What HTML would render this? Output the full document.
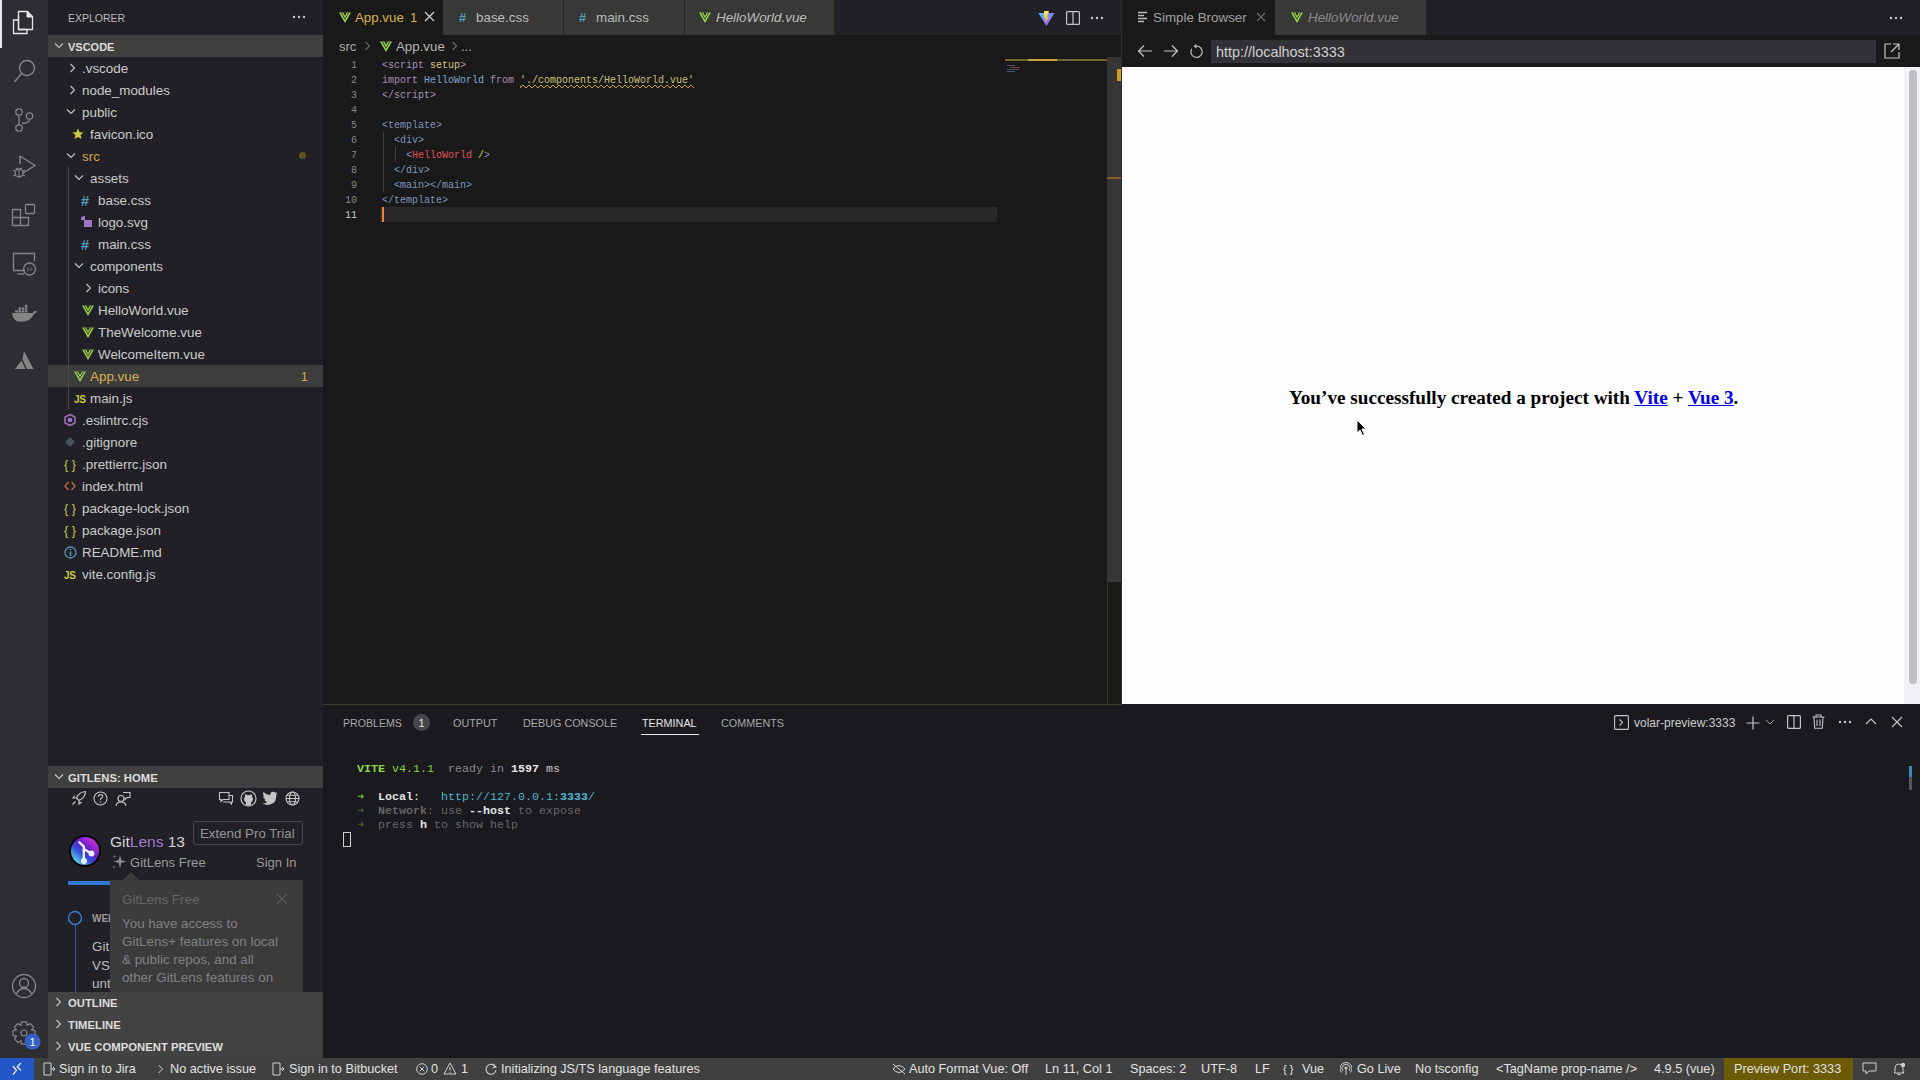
<!DOCTYPE html>
<html><head><meta charset="utf-8">
<style>
*{margin:0;padding:0;box-sizing:border-box}
html,body{width:1920px;height:1080px;overflow:hidden;background:#1e1e1e;font-family:"Liberation Sans",sans-serif;color:#ccc}
.b{position:absolute}
.t{position:absolute;white-space:nowrap}
.m{font-family:"Liberation Mono",monospace}
</style></head><body>

<div class="b" style="left:0px;top:0px;width:48px;height:1058px;background:#2d2d32;"></div>
<div class="b" style="left:48px;top:0px;width:275px;height:1058px;background:#202026;"></div>
<div class="b" style="left:323px;top:0px;width:799px;height:704px;background:#191919;"></div>
<div class="b" style="left:1122px;top:0px;width:798px;height:704px;background:#191919;"></div>
<div class="b" style="left:323px;top:704px;width:1597px;height:354px;background:#19191e;"></div>
<div class="b" style="left:0px;top:1058px;width:1920px;height:22px;background:#404040;"></div>
<div class="b" style="left:0px;top:0px;width:2px;height:48px;background:#e8e8e8;"></div>
<svg class="b" style="left:12px;top:10px;" width="24" height="26" viewBox="0 0 24 26"><path d="M6.5 5.5 V19.5 H15 V23.5 H1.5 V10 H6" fill="none" stroke="#e6e6e6" stroke-width="1.3"/><path d="M6.5 1.5 H15.5 L20.5 6.5 V19.5 H6.5 Z" fill="none" stroke="#e6e6e6" stroke-width="1.3"/><path d="M15 1.5 V7 H20.5" fill="#e6e6e6" stroke="#e6e6e6" stroke-width="1"/></svg>
<svg class="b" style="left:12px;top:58px;" width="26" height="26" viewBox="0 0 26 26"><circle cx="15" cy="10" r="7.5" fill="none" stroke="#858585" stroke-width="1.4"/><path d="M9.7 15.3 L2.5 24" stroke="#858585" stroke-width="1.5"/></svg>
<svg class="b" style="left:12px;top:106px;" width="26" height="26" viewBox="0 0 26 26"><circle cx="7" cy="6" r="3.2" fill="none" stroke="#858585" stroke-width="1.3"/><circle cx="17.5" cy="10" r="3.2" fill="none" stroke="#858585" stroke-width="1.3"/><circle cx="7" cy="22" r="3.2" fill="none" stroke="#858585" stroke-width="1.3"/><path d="M7 9.2 V18.8 M17.5 13.2 Q17.5 17 10 17.5" fill="none" stroke="#858585" stroke-width="1.3"/></svg>
<svg class="b" style="left:12px;top:154px;" width="26" height="26" viewBox="0 0 26 26"><path d="M8 2 L23 11.5 L11 19 M8 2 V10" fill="none" stroke="#858585" stroke-width="1.4"/><circle cx="7" cy="19" r="4" fill="none" stroke="#858585" stroke-width="1.4"/><path d="M1 16 L3.5 17 M1 22 L3.5 21 M13 16 L10.5 17 M13 22 L10.5 21 M7 15 V23 M4 14 L5.5 15.5 M10 14 L8.5 15.5" stroke="#858585" stroke-width="1.1"/></svg>
<svg class="b" style="left:11px;top:202px;" width="27" height="28" viewBox="0 0 27 28"><path d="M1.5 7.5 H9.5 V15.5 H1.5 Z M1.5 15.5 H9.5 V23.5 H1.5 Z M9.5 15.5 H17.5 V23.5 H9.5 Z" fill="none" stroke="#858585" stroke-width="1.3"/><rect x="14.5" y="2.5" width="9" height="9" rx="1" fill="none" stroke="#858585" stroke-width="1.3"/></svg>
<svg class="b" style="left:12px;top:252px;" width="26" height="26" viewBox="0 0 26 26"><path d="M13 18.5 H1.5 V1.5 H22.5 V9" fill="none" stroke="#858585" stroke-width="1.3"/><path d="M5 22 H12" stroke="#858585" stroke-width="1.3"/><circle cx="17.5" cy="17" r="6" fill="none" stroke="#858585" stroke-width="1.3"/><path d="M15 15.5 L17 17.5 M18 15.5 L20 17.5 M15 19 L16.5 17.5 M18 19 L19.5 17.5" stroke="#858585" stroke-width="1"/></svg>
<svg class="b" style="left:10px;top:302px;" width="28" height="22" viewBox="0 0 28 22"><path d="M2 11 H23 Q24 8.3 26.5 9 Q26.5 11.5 23.8 12.3 Q21 19.5 11 19.8 Q3 19.8 2 11 Z" fill="#858585"/><path d="M5.2 8.3 h2.6 v2.2 h-2.6z M8.4 8.3 h2.6 v2.2 h-2.6z M11.6 8.3 h2.6 v2.2 h-2.6z M14.8 8.3 h2.6 v2.2 h-2.6z M8.4 5.5 h2.6 v2.2 h-2.6z M11.6 5.5 h2.6 v2.2 h-2.6z M14.8 5.5 h2.6 v2.2 h-2.6z M14.8 2.7 h2.6 v2.2 h-2.6z" fill="#858585"/></svg>
<svg class="b" style="left:13px;top:349px;" width="22" height="22" viewBox="0 0 22 22"><path d="M11 2 L20.5 20 H14 L9.5 10.5 Q10.2 5.5 11 2 Z" fill="#858585"/><path d="M8.5 11.5 L12.5 20 H2 Z" fill="#858585"/></svg>
<svg class="b" style="left:11px;top:973px;" width="26" height="26" viewBox="0 0 26 26"><circle cx="13" cy="13" r="11.5" fill="none" stroke="#858585" stroke-width="1.3"/><circle cx="13" cy="10" r="4.5" fill="none" stroke="#858585" stroke-width="1.3"/><path d="M5.5 21 Q8 15.5 13 15.5 Q18 15.5 20.5 21" fill="none" stroke="#858585" stroke-width="1.3"/></svg>
<svg class="b" style="left:11px;top:1020px;" width="26" height="26" viewBox="0 0 26 26"><path d="M20.49 9.66 L24.03 10.53 L24.03 15.47 L20.49 16.34 L20.66 15.93 L22.54 19.05 L19.05 22.54 L15.93 20.66 L16.34 20.49 L15.47 24.03 L10.53 24.03 L9.66 20.49 L10.07 20.66 L6.95 22.54 L3.46 19.05 L5.34 15.93 L5.51 16.34 L1.97 15.47 L1.97 10.53 L5.51 9.66 L5.34 10.07 L3.46 6.95 L6.95 3.46 L10.07 5.34 L9.66 5.51 L10.53 1.97 L15.47 1.97 L16.34 5.51 L15.93 5.34 L19.05 3.46 L22.54 6.95 L20.66 10.07 Z" fill="none" stroke="#858585" stroke-width="1.2" stroke-linejoin="round"/><circle cx="13" cy="13" r="3" fill="none" stroke="#858585" stroke-width="1.2"/></svg>
<svg class="b" style="left:24px;top:1033px;" width="17" height="17" viewBox="0 0 17 17"><circle cx="8.5" cy="8.5" r="8" fill="#3560c8"/><text x="8.5" y="12.5" font-size="11" text-anchor="middle" fill="#fff" font-family="Liberation Sans">1</text></svg>
<div class="t" style="left:68px;top:8px;height:20px;line-height:20px;font-size:10.5px;color:#bbbbbb;font-weight:normal;font-style:normal;font-family:'Liberation Sans',sans-serif;">EXPLORER</div>
<svg class="b" style="left:292px;top:15px;" width="16" height="4" viewBox="0 0 16 4"><circle cx="2" cy="2" r="1.2" fill="#c5c5c5"/><circle cx="7" cy="2" r="1.2" fill="#c5c5c5"/><circle cx="12" cy="2" r="1.2" fill="#c5c5c5"/></svg>
<div class="b" style="left:48px;top:35px;width:275px;height:22px;background:#404040;"></div>
<svg class="b" style="left:54px;top:42px;" width="10" height="7" viewBox="0 0 10 7"><path d="M1 1.5 L5 5.5 L9 1.5" fill="none" stroke="#c5c5c5" stroke-width="1.1"/></svg>
<div class="t" style="left:68px;top:37px;height:20px;line-height:20px;font-size:11px;color:#dddddd;font-weight:bold;font-style:normal;font-family:'Liberation Sans',sans-serif;">VSCODE</div>
<svg class="b" style="left:69px;top:63px;" width="7" height="10" viewBox="0 0 7 10"><path d="M1.5 1 L5.5 5 L1.5 9" fill="none" stroke="#c5c5c5" stroke-width="1.1"/></svg>
<div class="t" style="left:82px;top:59px;height:20px;line-height:20px;font-size:13.4px;color:#cccccc;font-weight:normal;font-style:normal;font-family:'Liberation Sans',sans-serif;">.vscode</div>
<svg class="b" style="left:69px;top:85px;" width="7" height="10" viewBox="0 0 7 10"><path d="M1.5 1 L5.5 5 L1.5 9" fill="none" stroke="#c5c5c5" stroke-width="1.1"/></svg>
<div class="t" style="left:82px;top:81px;height:20px;line-height:20px;font-size:13.4px;color:#cccccc;font-weight:normal;font-style:normal;font-family:'Liberation Sans',sans-serif;">node_modules</div>
<svg class="b" style="left:66px;top:108px;" width="10" height="7" viewBox="0 0 10 7"><path d="M1 1.5 L5 5.5 L9 1.5" fill="none" stroke="#c5c5c5" stroke-width="1.1"/></svg>
<div class="t" style="left:82px;top:103px;height:20px;line-height:20px;font-size:13.4px;color:#cccccc;font-weight:normal;font-style:normal;font-family:'Liberation Sans',sans-serif;">public</div>
<svg class="b" style="left:72px;top:128px;" width="12" height="12" viewBox="0 0 12 12"><path d="M6 0.5 L7.6 4.2 L11.6 4.5 L8.6 7.1 L9.5 11 L6 8.9 L2.5 11 L3.4 7.1 L0.4 4.5 L4.4 4.2 Z" fill="#cbcb41"/></svg>
<div class="t" style="left:90px;top:125px;height:20px;line-height:20px;font-size:13.4px;color:#cccccc;font-weight:normal;font-style:normal;font-family:'Liberation Sans',sans-serif;">favicon.ico</div>
<svg class="b" style="left:66px;top:152px;" width="10" height="7" viewBox="0 0 10 7"><path d="M1 1.5 L5 5.5 L9 1.5" fill="none" stroke="#c5c5c5" stroke-width="1.1"/></svg>
<div class="t" style="left:82px;top:147px;height:20px;line-height:20px;font-size:13.4px;color:#d7a64a;font-weight:normal;font-style:normal;font-family:'Liberation Sans',sans-serif;">src</div>
<svg class="b" style="left:74px;top:174px;" width="10" height="7" viewBox="0 0 10 7"><path d="M1 1.5 L5 5.5 L9 1.5" fill="none" stroke="#c5c5c5" stroke-width="1.1"/></svg>
<div class="t" style="left:90px;top:169px;height:20px;line-height:20px;font-size:13.4px;color:#cccccc;font-weight:normal;font-style:normal;font-family:'Liberation Sans',sans-serif;">assets</div>
<div class="t" style="left:81px;top:191px;height:20px;line-height:20px;font-size:14.5px;color:#519aba;font-weight:bold;font-style:normal;font-family:'Liberation Sans',sans-serif;">#</div>
<div class="t" style="left:98px;top:191px;height:20px;line-height:20px;font-size:13.4px;color:#cccccc;font-weight:normal;font-style:normal;font-family:'Liberation Sans',sans-serif;">base.css</div>
<svg class="b" style="left:80px;top:215px;" width="13" height="13" viewBox="0 0 13 13"><path d="M1 4 Q1 1 4 1 L5 1 L5 5 L1 5Z" fill="#a074c4"/><rect x="4" y="5" width="8" height="7" fill="#a074c4"/></svg>
<div class="t" style="left:98px;top:213px;height:20px;line-height:20px;font-size:13.4px;color:#cccccc;font-weight:normal;font-style:normal;font-family:'Liberation Sans',sans-serif;">logo.svg</div>
<div class="t" style="left:81px;top:235px;height:20px;line-height:20px;font-size:14.5px;color:#519aba;font-weight:bold;font-style:normal;font-family:'Liberation Sans',sans-serif;">#</div>
<div class="t" style="left:98px;top:235px;height:20px;line-height:20px;font-size:13.4px;color:#cccccc;font-weight:normal;font-style:normal;font-family:'Liberation Sans',sans-serif;">main.css</div>
<svg class="b" style="left:74px;top:262px;" width="10" height="7" viewBox="0 0 10 7"><path d="M1 1.5 L5 5.5 L9 1.5" fill="none" stroke="#c5c5c5" stroke-width="1.1"/></svg>
<div class="t" style="left:90px;top:257px;height:20px;line-height:20px;font-size:13.4px;color:#cccccc;font-weight:normal;font-style:normal;font-family:'Liberation Sans',sans-serif;">components</div>
<svg class="b" style="left:85px;top:283px;" width="7" height="10" viewBox="0 0 7 10"><path d="M1.5 1 L5.5 5 L1.5 9" fill="none" stroke="#c5c5c5" stroke-width="1.1"/></svg>
<div class="t" style="left:98px;top:279px;height:20px;line-height:20px;font-size:13.4px;color:#cccccc;font-weight:normal;font-style:normal;font-family:'Liberation Sans',sans-serif;">icons</div>
<svg class="b" style="left:82px;top:305px;" width="12" height="12" viewBox="0 0 12 12"><path d="M0 0.5 H12 L6 11 Z" fill="#9bd04f"/><path d="M2.3 0.5 L6 7.2 L9.7 0.5" fill="none" stroke="#2a3a20" stroke-width="0.9"/><path d="M4.2 0.5 H7.8 L6 3.8 Z" fill="#1e1e1e"/></svg>
<div class="t" style="left:98px;top:301px;height:20px;line-height:20px;font-size:13.4px;color:#cccccc;font-weight:normal;font-style:normal;font-family:'Liberation Sans',sans-serif;">HelloWorld.vue</div>
<svg class="b" style="left:82px;top:327px;" width="12" height="12" viewBox="0 0 12 12"><path d="M0 0.5 H12 L6 11 Z" fill="#9bd04f"/><path d="M2.3 0.5 L6 7.2 L9.7 0.5" fill="none" stroke="#2a3a20" stroke-width="0.9"/><path d="M4.2 0.5 H7.8 L6 3.8 Z" fill="#1e1e1e"/></svg>
<div class="t" style="left:98px;top:323px;height:20px;line-height:20px;font-size:13.4px;color:#cccccc;font-weight:normal;font-style:normal;font-family:'Liberation Sans',sans-serif;">TheWelcome.vue</div>
<svg class="b" style="left:82px;top:349px;" width="12" height="12" viewBox="0 0 12 12"><path d="M0 0.5 H12 L6 11 Z" fill="#9bd04f"/><path d="M2.3 0.5 L6 7.2 L9.7 0.5" fill="none" stroke="#2a3a20" stroke-width="0.9"/><path d="M4.2 0.5 H7.8 L6 3.8 Z" fill="#1e1e1e"/></svg>
<div class="t" style="left:98px;top:345px;height:20px;line-height:20px;font-size:13.4px;color:#cccccc;font-weight:normal;font-style:normal;font-family:'Liberation Sans',sans-serif;">WelcomeItem.vue</div>
<div class="b" style="left:48px;top:365px;width:275px;height:22px;background:#3d3d3e;"></div>
<svg class="b" style="left:74px;top:371px;" width="12" height="12" viewBox="0 0 12 12"><path d="M0 0.5 H12 L6 11 Z" fill="#9bd04f"/><path d="M2.3 0.5 L6 7.2 L9.7 0.5" fill="none" stroke="#2a3a20" stroke-width="0.9"/><path d="M4.2 0.5 H7.8 L6 3.8 Z" fill="#1e1e1e"/></svg>
<div class="t" style="left:90px;top:367px;height:20px;line-height:20px;font-size:13.4px;color:#d7b24a;font-weight:normal;font-style:normal;font-family:'Liberation Sans',sans-serif;">App.vue</div>
<div class="t" style="left:74px;top:390px;height:20px;line-height:20px;font-size:10px;color:#cbcb41;font-weight:bold;font-style:normal;font-family:'Liberation Sans',sans-serif;letter-spacing:-0.3px">JS</div>
<div class="t" style="left:90px;top:389px;height:20px;line-height:20px;font-size:13.4px;color:#cccccc;font-weight:normal;font-style:normal;font-family:'Liberation Sans',sans-serif;">main.js</div>
<svg class="b" style="left:64px;top:414px;" width="12" height="12" viewBox="0 0 12 12"><path d="M6 0.5 L11 3.2 V8.8 L6 11.5 L1 8.8 V3.2 Z" fill="none" stroke="#a074c4" stroke-width="1.5"/><circle cx="6" cy="6" r="2.3" fill="#a074c4"/></svg>
<div class="t" style="left:82px;top:411px;height:20px;line-height:20px;font-size:13.4px;color:#cccccc;font-weight:normal;font-style:normal;font-family:'Liberation Sans',sans-serif;">.eslintrc.cjs</div>
<svg class="b" style="left:64px;top:436px;" width="12" height="12" viewBox="0 0 12 12"><path d="M6 1 L11 6 L6 11 L1 6 Z" fill="#41535b"/></svg>
<div class="t" style="left:82px;top:433px;height:20px;line-height:20px;font-size:13.4px;color:#cccccc;font-weight:normal;font-style:normal;font-family:'Liberation Sans',sans-serif;">.gitignore</div>
<div class="t" style="left:64px;top:455px;height:20px;line-height:20px;font-size:12.5px;color:#c8c845;font-weight:normal;font-style:normal;font-family:'Liberation Sans',sans-serif;letter-spacing:0px">{&nbsp;}</div>
<div class="t" style="left:82px;top:455px;height:20px;line-height:20px;font-size:13.4px;color:#cccccc;font-weight:normal;font-style:normal;font-family:'Liberation Sans',sans-serif;">.prettierrc.json</div>
<svg class="b" style="left:64px;top:481px;" width="12" height="10" viewBox="0 0 12 10"><path d="M4.5 1 L1 5 L4.5 9 M7.5 1 L11 5 L7.5 9" fill="none" stroke="#c8693a" stroke-width="1.2"/></svg>
<div class="t" style="left:82px;top:477px;height:20px;line-height:20px;font-size:13.4px;color:#cccccc;font-weight:normal;font-style:normal;font-family:'Liberation Sans',sans-serif;">index.html</div>
<div class="t" style="left:64px;top:499px;height:20px;line-height:20px;font-size:12.5px;color:#c8c845;font-weight:normal;font-style:normal;font-family:'Liberation Sans',sans-serif;letter-spacing:0px">{&nbsp;}</div>
<div class="t" style="left:82px;top:499px;height:20px;line-height:20px;font-size:13.4px;color:#cccccc;font-weight:normal;font-style:normal;font-family:'Liberation Sans',sans-serif;">package-lock.json</div>
<div class="t" style="left:64px;top:521px;height:20px;line-height:20px;font-size:12.5px;color:#c8c845;font-weight:normal;font-style:normal;font-family:'Liberation Sans',sans-serif;letter-spacing:0px">{&nbsp;}</div>
<div class="t" style="left:82px;top:521px;height:20px;line-height:20px;font-size:13.4px;color:#cccccc;font-weight:normal;font-style:normal;font-family:'Liberation Sans',sans-serif;">package.json</div>
<svg class="b" style="left:64px;top:546px;" width="13" height="13" viewBox="0 0 13 13"><circle cx="6.5" cy="6.5" r="5.5" fill="none" stroke="#519aba" stroke-width="1.3"/><path d="M6.5 5.5 V10 M6.5 3 V4" stroke="#519aba" stroke-width="1.5"/></svg>
<div class="t" style="left:82px;top:543px;height:20px;line-height:20px;font-size:13.4px;color:#cccccc;font-weight:normal;font-style:normal;font-family:'Liberation Sans',sans-serif;">README.md</div>
<div class="t" style="left:64px;top:566px;height:20px;line-height:20px;font-size:10px;color:#cbcb41;font-weight:bold;font-style:normal;font-family:'Liberation Sans',sans-serif;letter-spacing:-0.3px">JS</div>
<div class="t" style="left:82px;top:565px;height:20px;line-height:20px;font-size:13.4px;color:#cccccc;font-weight:normal;font-style:normal;font-family:'Liberation Sans',sans-serif;">vite.config.js</div>
<svg class="b" style="left:298px;top:151px;" width="9" height="9" viewBox="0 0 9 9"><circle cx="4.5" cy="4.5" r="3.5" fill="#5e5020"/></svg>
<div class="t" style="left:301px;top:367px;height:20px;line-height:20px;font-size:12px;color:#d7b24a;font-weight:normal;font-style:normal;font-family:'Liberation Sans',sans-serif;">1</div>
<div class="b" style="left:68px;top:167px;width:1px;height:242px;background:#4a4a4e;"></div>
<div class="b" style="left:48px;top:766px;width:275px;height:22px;background:#404040;"></div>
<svg class="b" style="left:54px;top:773px;" width="10" height="7" viewBox="0 0 10 7"><path d="M1 1.5 L5 5.5 L9 1.5" fill="none" stroke="#c5c5c5" stroke-width="1.1"/></svg>
<div class="t" style="left:68px;top:768px;height:20px;line-height:20px;font-size:11.3px;color:#dddddd;font-weight:bold;font-style:normal;font-family:'Liberation Sans',sans-serif;">GITLENS: HOME</div>
<svg class="b" style="left:71px;top:790px;" width="16" height="16" viewBox="0 0 16 16"><path d="M14.5 1.5 Q8 2 5.5 8 L8 10.5 Q14 8 14.5 1.5 Z M5.5 8 L2 8 L4 5.5 M8 10.5 V14 L10.5 12 M4.5 11.5 L1.5 14.5" fill="none" stroke="#c5c5c5" stroke-width="1.2"/></svg>
<svg class="b" style="left:93px;top:791px;" width="15" height="15" viewBox="0 0 15 15"><circle cx="7.5" cy="7.5" r="6.5" fill="none" stroke="#c5c5c5" stroke-width="1.1"/><path d="M5.3 5.8 Q5.3 3.6 7.5 3.6 Q9.7 3.6 9.7 5.6 Q9.7 7 7.5 7.8 V9" fill="none" stroke="#c5c5c5" stroke-width="1.1"/><circle cx="7.5" cy="11" r="0.8" fill="#c5c5c5"/></svg>
<svg class="b" style="left:115px;top:791px;" width="16" height="16" viewBox="0 0 16 16"><circle cx="6" cy="7.5" r="3" fill="none" stroke="#c5c5c5" stroke-width="1.1"/><path d="M1 15 Q1.5 11 6 11 Q10.5 11 11 15 M8 1.5 H15 V6.5 H12 L10 8.5 V6.5" fill="none" stroke="#c5c5c5" stroke-width="1.1"/></svg>
<svg class="b" style="left:218px;top:791px;" width="16" height="16" viewBox="0 0 16 16"><path d="M1.5 1.5 H11 V8.5 H5 L3 10.5 V8.5 H1.5 Z M5 11 H11.5 L13.5 13 V11 H14.5 V4.5 H11.5" fill="none" stroke="#c5c5c5" stroke-width="1.1"/></svg>
<svg class="b" style="left:240px;top:790px;" width="17" height="17" viewBox="0 0 17 17"><circle cx="8.5" cy="8.5" r="7.5" fill="none" stroke="#c5c5c5" stroke-width="1.2"/><path d="M6 15.5 V12.5 Q4 12 4 9 Q4 7.5 5 6.5 Q4.8 5 5.3 4.3 Q6.5 4.5 7.3 5.2 Q8.5 5 9.7 5.2 Q10.5 4.5 11.7 4.3 Q12.2 5 12 6.5 Q13 7.5 13 9 Q13 12 11 12.5 V15.5 Z" fill="#c5c5c5"/></svg>
<svg class="b" style="left:262px;top:791px;" width="16" height="14" viewBox="0 0 16 14"><path d="M15.5 2 Q14.7 2.5 13.8 2.6 Q14.8 2 15.1 1 Q14.2 1.5 13.2 1.7 Q11.8 0.3 9.8 1 Q7.8 2 8.2 4.3 Q4.2 4.1 1.5 1 Q0.3 3.5 2.5 5.6 Q1.8 5.6 1.1 5.2 Q1.2 7.8 3.7 8.5 Q3 8.7 2.3 8.6 Q3 10.8 5.4 11 Q3.2 12.7 0.4 12.5 Q7 16 12.3 11.3 Q14.5 8.5 14.2 3.8 Q15 3.1 15.5 2 Z" fill="#c5c5c5"/></svg>
<svg class="b" style="left:285px;top:791px;" width="15" height="15" viewBox="0 0 15 15"><circle cx="7.5" cy="7.5" r="6.5" fill="none" stroke="#c5c5c5" stroke-width="1.1"/><ellipse cx="7.5" cy="7.5" rx="3" ry="6.5" fill="none" stroke="#c5c5c5" stroke-width="1.1"/><path d="M1 7.5 H14 M2 4.2 H13 M2 10.8 H13" stroke="#c5c5c5" stroke-width="1"/></svg>
<div class="b" style="left:193px;top:821px;width:110px;height:24px;background:transparent;border:1px solid #464648;border-radius:3px"></div>
<div class="t" style="left:200px;top:824px;height:20px;line-height:20px;font-size:13.3px;color:#949494;font-weight:normal;font-style:normal;font-family:'Liberation Sans',sans-serif;">Extend Pro Trial</div>
<svg class="b" style="left:68px;top:834px;" width="34" height="34" viewBox="0 0 34 34"><defs><linearGradient id="gl" x1="0.15" y1="0.9" x2="0.85" y2="0.1"><stop offset="0" stop-color="#5fd8f0"/><stop offset="0.35" stop-color="#3050d8"/><stop offset="0.6" stop-color="#6020c8"/><stop offset="1" stop-color="#d030e0"/></linearGradient></defs><circle cx="17" cy="17" r="16" fill="#050505"/><circle cx="17" cy="17" r="14" fill="url(#gl)"/><path d="M10.5 7.5 L15.8 12.5 V27 M15.8 15 L23.5 19.5" fill="none" stroke="#eeeef8" stroke-width="2.4"/><circle cx="16" cy="27" r="3" fill="#eeeef8"/><circle cx="23.5" cy="19.5" r="3" fill="#eeeef8"/></svg>
<div class="t" style="left:110px;top:832px;height:20px;line-height:20px;font-size:15.5px;color:#d4d4d4;font-weight:normal;font-style:normal;font-family:'Liberation Sans',sans-serif;">Git<span style="color:#a877d8">Lens</span> 13</div>
<svg class="b" style="left:111px;top:853px;" width="16" height="18" viewBox="0 0 16 18"><path d="M9 2 L10.3 7 L15 8.5 L10.3 10 L9 15 L7.7 10 L3 8.5 L7.7 7 Z" fill="#8a8a8a"/><path d="M3.5 1 L4 3 L6 3.5 L4 4 L3.5 6 L3 4 L1 3.5 L3 3 Z M3 12 L3.4 13.6 L5 14 L3.4 14.4 L3 16 L2.6 14.4 L1 14 L2.6 13.6 Z" fill="#6a6a6a"/></svg>
<div class="t" style="left:130px;top:853px;height:20px;line-height:20px;font-size:13.1px;color:#9a9a9a;font-weight:normal;font-style:normal;font-family:'Liberation Sans',sans-serif;">GitLens Free</div>
<div class="t" style="left:256px;top:853px;height:20px;line-height:20px;font-size:13px;color:#9a9a9a;font-weight:normal;font-style:normal;font-family:'Liberation Sans',sans-serif;">Sign In</div>
<div class="b" style="left:68px;top:881px;width:42px;height:4px;background:#2e7bd6;"></div>
<svg class="b" style="left:67px;top:910px;" width="16" height="16" viewBox="0 0 16 16"><circle cx="8" cy="8" r="6.5" fill="none" stroke="#3b7fd0" stroke-width="1.4"/></svg>
<div class="b" style="left:75px;top:925px;width:1px;height:67px;background:#2f5f9e;"></div>
<div class="t" style="left:92px;top:909px;height:20px;line-height:20px;font-size:10px;color:#9a9a9a;font-weight:bold;font-style:normal;font-family:'Liberation Sans',sans-serif;">WEL</div>
<div class="t" style="left:92px;top:937px;height:20px;line-height:20px;font-size:13.4px;color:#bdbdbd;font-weight:normal;font-style:normal;font-family:'Liberation Sans',sans-serif;">Git</div>
<div class="t" style="left:92px;top:956px;height:20px;line-height:20px;font-size:13.4px;color:#bdbdbd;font-weight:normal;font-style:normal;font-family:'Liberation Sans',sans-serif;">VS</div>
<div class="t" style="left:92px;top:974px;height:20px;line-height:20px;font-size:13.4px;color:#bdbdbd;font-weight:normal;font-style:normal;font-family:'Liberation Sans',sans-serif;">unt</div>
<svg class="b" style="left:122px;top:872px;" width="18" height="9" viewBox="0 0 18 9"><path d="M0 9 L9 0 L18 9 Z" fill="#3b3b3c"/></svg>
<div class="b" style="left:110px;top:880px;width:193px;height:112px;background:#3b3b3c;"></div>
<div class="t" style="left:122px;top:890px;height:20px;line-height:20px;font-size:13.4px;color:#646466;font-weight:normal;font-style:normal;font-family:'Liberation Sans',sans-serif;">GitLens Free</div>
<svg class="b" style="left:276px;top:893px;" width="12" height="12" viewBox="0 0 12 12"><path d="M1 1 L11 11 M11 1 L1 11" stroke="#5a5a5e" stroke-width="1.2"/></svg>
<div class="t" style="left:122px;top:914px;height:20px;line-height:20px;font-size:13.4px;color:#808082;font-weight:normal;font-style:normal;font-family:'Liberation Sans',sans-serif;">You have access to</div>
<div class="t" style="left:122px;top:932px;height:20px;line-height:20px;font-size:13.4px;color:#808082;font-weight:normal;font-style:normal;font-family:'Liberation Sans',sans-serif;">GitLens+ features on local</div>
<div class="t" style="left:122px;top:950px;height:20px;line-height:20px;font-size:13.4px;color:#808082;font-weight:normal;font-style:normal;font-family:'Liberation Sans',sans-serif;">&amp; public repos, and all</div>
<div class="t" style="left:122px;top:968px;height:20px;line-height:20px;font-size:13.4px;color:#808082;font-weight:normal;font-style:normal;font-family:'Liberation Sans',sans-serif;">other GitLens features on</div>
<div class="b" style="left:48px;top:992px;width:275px;height:66px;background:#424242;"></div>
<svg class="b" style="left:55px;top:997px;" width="7" height="10" viewBox="0 0 7 10"><path d="M1.5 1 L5.5 5 L1.5 9" fill="none" stroke="#c5c5c5" stroke-width="1.1"/></svg>
<div class="t" style="left:68px;top:993px;height:20px;line-height:20px;font-size:11.3px;color:#dddddd;font-weight:bold;font-style:normal;font-family:'Liberation Sans',sans-serif;">OUTLINE</div>
<svg class="b" style="left:55px;top:1019px;" width="7" height="10" viewBox="0 0 7 10"><path d="M1.5 1 L5.5 5 L1.5 9" fill="none" stroke="#c5c5c5" stroke-width="1.1"/></svg>
<div class="t" style="left:68px;top:1015px;height:20px;line-height:20px;font-size:11.3px;color:#dddddd;font-weight:bold;font-style:normal;font-family:'Liberation Sans',sans-serif;">TIMELINE</div>
<svg class="b" style="left:55px;top:1041px;" width="7" height="10" viewBox="0 0 7 10"><path d="M1.5 1 L5.5 5 L1.5 9" fill="none" stroke="#c5c5c5" stroke-width="1.1"/></svg>
<div class="t" style="left:68px;top:1037px;height:20px;line-height:20px;font-size:11.3px;color:#dddddd;font-weight:bold;font-style:normal;font-family:'Liberation Sans',sans-serif;">VUE COMPONENT PREVIEW</div>
<div class="b" style="left:443px;top:0px;width:391px;height:35px;background:#383836;"></div>
<div class="b" style="left:563px;top:0px;width:1px;height:35px;background:#262629;"></div>
<div class="b" style="left:684px;top:0px;width:1px;height:35px;background:#262629;"></div>
<div class="b" style="left:834px;top:0px;width:287px;height:35px;background:#222226;"></div>
<svg class="b" style="left:339px;top:12px;" width="12" height="12" viewBox="0 0 12 12"><path d="M0 0.5 H12 L6 11 Z" fill="#9bd04f"/><path d="M2.3 0.5 L6 7.2 L9.7 0.5" fill="none" stroke="#2a3a20" stroke-width="0.9"/><path d="M4.2 0.5 H7.8 L6 3.8 Z" fill="#1e1e1e"/></svg>
<div class="t" style="left:355px;top:8px;height:20px;line-height:20px;font-size:13.3px;color:#d7b24a;font-weight:normal;font-style:normal;font-family:'Liberation Sans',sans-serif;">App.vue</div>
<div class="t" style="left:410px;top:8px;height:20px;line-height:20px;font-size:13px;color:#d7b24a;font-weight:normal;font-style:normal;font-family:'Liberation Sans',sans-serif;">1</div>
<svg class="b" style="left:424px;top:11px;" width="11" height="11" viewBox="0 0 11 11"><path d="M1 1 L10 10 M10 1 L1 10" stroke="#d0d0d0" stroke-width="1.3"/></svg>
<div class="t" style="left:459px;top:8px;height:20px;line-height:20px;font-size:13px;color:#519aba;font-weight:bold;font-style:normal;font-family:'Liberation Sans',sans-serif;">#</div>
<div class="t" style="left:476px;top:8px;height:20px;line-height:20px;font-size:13.4px;color:#bdbdbd;font-weight:normal;font-style:normal;font-family:'Liberation Sans',sans-serif;">base.css</div>
<div class="t" style="left:579px;top:8px;height:20px;line-height:20px;font-size:13px;color:#519aba;font-weight:bold;font-style:normal;font-family:'Liberation Sans',sans-serif;">#</div>
<div class="t" style="left:596px;top:8px;height:20px;line-height:20px;font-size:13.4px;color:#bdbdbd;font-weight:normal;font-style:normal;font-family:'Liberation Sans',sans-serif;">main.css</div>
<svg class="b" style="left:699px;top:12px;" width="12" height="12" viewBox="0 0 12 12"><path d="M0 0.5 H12 L6 11 Z" fill="#9bd04f"/><path d="M2.3 0.5 L6 7.2 L9.7 0.5" fill="none" stroke="#2a3a20" stroke-width="0.9"/><path d="M4.2 0.5 H7.8 L6 3.8 Z" fill="#1e1e1e"/></svg>
<div class="t" style="left:716px;top:8px;height:20px;line-height:20px;font-size:13.4px;color:#bdbdbd;font-weight:normal;font-style:italic;font-family:'Liberation Sans',sans-serif;">HelloWorld.vue</div>
<svg class="b" style="left:1038px;top:10px;" width="17" height="17" viewBox="0 0 17 17"><defs><linearGradient id="vg" x1="0" y1="0" x2="1" y2="1"><stop offset="0" stop-color="#41d1ff"/><stop offset="1" stop-color="#bd34fe"/></linearGradient><linearGradient id="vy" x1="0" y1="0" x2="0" y2="1"><stop offset="0" stop-color="#ffea83"/><stop offset="1" stop-color="#ffa800"/></linearGradient></defs><path d="M0.5 3 L8.5 16 L16.5 3 Z" fill="url(#vg)"/><path d="M6 1 L11 1 L9 7 L11 7 L7 13 L8 8 L6 8 Z" fill="url(#vy)"/></svg>
<svg class="b" style="left:1066px;top:11px;" width="14" height="14" viewBox="0 0 14 14"><rect x="0.6" y="0.6" width="12.8" height="12.8" rx="1" fill="none" stroke="#c5c5c5" stroke-width="1.2"/><path d="M7 1 V13" stroke="#c5c5c5" stroke-width="1.2"/></svg>
<svg class="b" style="left:1090px;top:16px;" width="16" height="4" viewBox="0 0 16 4"><circle cx="2" cy="2" r="1.2" fill="#c5c5c5"/><circle cx="7" cy="2" r="1.2" fill="#c5c5c5"/><circle cx="12" cy="2" r="1.2" fill="#c5c5c5"/></svg>
<div class="b" style="left:1121px;top:0px;width:1px;height:704px;background:#2c2c30;"></div>
<div class="t" style="left:339px;top:37px;height:20px;line-height:20px;font-size:13px;color:#a9a9a9;font-weight:normal;font-style:normal;font-family:'Liberation Sans',sans-serif;">src</div>
<svg class="b" style="left:364px;top:41px;" width="7" height="10" viewBox="0 0 7 10"><path d="M1.5 1 L5.5 5 L1.5 9" fill="none" stroke="#9a9a9a" stroke-width="1"/></svg>
<svg class="b" style="left:380px;top:41px;" width="12" height="12" viewBox="0 0 12 12"><path d="M0 0.5 H12 L6 11 Z" fill="#9bd04f"/><path d="M2.3 0.5 L6 7.2 L9.7 0.5" fill="none" stroke="#2a3a20" stroke-width="0.9"/><path d="M4.2 0.5 H7.8 L6 3.8 Z" fill="#1e1e1e"/></svg>
<div class="t" style="left:396px;top:37px;height:20px;line-height:20px;font-size:13.3px;color:#b5b5b5;font-weight:normal;font-style:normal;font-family:'Liberation Sans',sans-serif;">App.vue</div>
<svg class="b" style="left:451px;top:41px;" width="7" height="10" viewBox="0 0 7 10"><path d="M1.5 1 L5.5 5 L1.5 9" fill="none" stroke="#9a9a9a" stroke-width="1"/></svg>
<div class="t" style="left:461px;top:37px;height:20px;line-height:20px;font-size:13px;color:#b5b5b5;font-weight:normal;font-style:normal;font-family:'Liberation Sans',sans-serif;">...</div>
<div class="b" style="left:380px;top:207px;width:617px;height:15px;background:#28282b;"></div>
<div class="b" style="left:382px;top:207px;width:2px;height:15px;background:#e8882a;"></div>
<div class="t" style="left:351px;top:56px;height:20px;line-height:20px;font-size:10px;color:#858585;font-weight:normal;font-style:normal;font-family:'Liberation Mono',monospace;">1</div>
<div class="t" style="left:351px;top:71px;height:20px;line-height:20px;font-size:10px;color:#858585;font-weight:normal;font-style:normal;font-family:'Liberation Mono',monospace;">2</div>
<div class="t" style="left:351px;top:86px;height:20px;line-height:20px;font-size:10px;color:#858585;font-weight:normal;font-style:normal;font-family:'Liberation Mono',monospace;">3</div>
<div class="t" style="left:351px;top:101px;height:20px;line-height:20px;font-size:10px;color:#858585;font-weight:normal;font-style:normal;font-family:'Liberation Mono',monospace;">4</div>
<div class="t" style="left:351px;top:116px;height:20px;line-height:20px;font-size:10px;color:#858585;font-weight:normal;font-style:normal;font-family:'Liberation Mono',monospace;">5</div>
<div class="t" style="left:351px;top:131px;height:20px;line-height:20px;font-size:10px;color:#858585;font-weight:normal;font-style:normal;font-family:'Liberation Mono',monospace;">6</div>
<div class="t" style="left:351px;top:146px;height:20px;line-height:20px;font-size:10px;color:#858585;font-weight:normal;font-style:normal;font-family:'Liberation Mono',monospace;">7</div>
<div class="t" style="left:351px;top:161px;height:20px;line-height:20px;font-size:10px;color:#858585;font-weight:normal;font-style:normal;font-family:'Liberation Mono',monospace;">8</div>
<div class="t" style="left:351px;top:176px;height:20px;line-height:20px;font-size:10px;color:#858585;font-weight:normal;font-style:normal;font-family:'Liberation Mono',monospace;">9</div>
<div class="t" style="left:345px;top:191px;height:20px;line-height:20px;font-size:10px;color:#858585;font-weight:normal;font-style:normal;font-family:'Liberation Mono',monospace;">10</div>
<div class="t" style="left:345px;top:206px;height:20px;line-height:20px;font-size:10px;color:#c6c6c6;font-weight:normal;font-style:normal;font-family:'Liberation Mono',monospace;">11</div>
<div class="t" style="left:382px;top:58px;height:15px;line-height:15px;font-size:10px;font-family:'Liberation Mono',monospace;white-space:pre"><span style="color:#a592b5">&lt;script</span> <span style="color:#d9c27c">setup</span><span style="color:#a592b5">&gt;</span></div>
<div class="t" style="left:382px;top:73px;height:15px;line-height:15px;font-size:10px;font-family:'Liberation Mono',monospace;white-space:pre"><span style="color:#a88db8">import</span> <span style="color:#7da6da">HelloWorld</span> <span style="color:#a88db8">from</span> <span style="color:#c8c27a">'./components/HelloWorld.vue'</span></div>
<div class="t" style="left:382px;top:88px;height:15px;line-height:15px;font-size:10px;font-family:'Liberation Mono',monospace;white-space:pre"><span style="color:#a592b5">&lt;/script&gt;</span></div>
<div class="t" style="left:382px;top:118px;height:15px;line-height:15px;font-size:10px;font-family:'Liberation Mono',monospace;white-space:pre"><span style="color:#7f95bd">&lt;template&gt;</span></div>
<div class="t" style="left:382px;top:133px;height:15px;line-height:15px;font-size:10px;font-family:'Liberation Mono',monospace;white-space:pre">  <span style="color:#7f95bd">&lt;div&gt;</span></div>
<div class="t" style="left:382px;top:148px;height:15px;line-height:15px;font-size:10px;font-family:'Liberation Mono',monospace;white-space:pre">    <span style="color:#7f95bd">&lt;</span><span style="color:#e0505a">HelloWorld</span> <span style="color:#d9c27c">/</span><span style="color:#7f95bd">&gt;</span></div>
<div class="t" style="left:382px;top:163px;height:15px;line-height:15px;font-size:10px;font-family:'Liberation Mono',monospace;white-space:pre">  <span style="color:#7f95bd">&lt;/div&gt;</span></div>
<div class="t" style="left:382px;top:178px;height:15px;line-height:15px;font-size:10px;font-family:'Liberation Mono',monospace;white-space:pre">  <span style="color:#7f95bd">&lt;main&gt;&lt;/main&gt;</span></div>
<div class="t" style="left:382px;top:193px;height:15px;line-height:15px;font-size:10px;font-family:'Liberation Mono',monospace;white-space:pre"><span style="color:#7f95bd">&lt;/template&gt;</span></div>
<svg class="b" style="left:520px;top:85px;" width="176" height="4" viewBox="0 0 176 4"><path d="M520 0 L520 3 L523 0 L526 3 L529 0 L532 3 L535 0 L538 3 L541 0 L544 3 L547 0 L550 3 L553 0 L556 3 L559 0 L562 3 L565 0 L568 3 L571 0 L574 3 L577 0 L580 3 L583 0 L586 3 L589 0 L592 3 L595 0 L598 3 L601 0 L604 3 L607 0 L610 3 L613 0 L616 3 L619 0 L622 3 L625 0 L628 3 L631 0 L634 3 L637 0 L640 3 L643 0 L646 3 L649 0 L652 3 L655 0 L658 3 L661 0 L664 3 L667 0 L670 3 L673 0 L676 3 L679 0 L682 3 L685 0 L688 3 L691 0 L694 3 " transform="translate(-520,0)" fill="none" stroke="#c9a227" stroke-width="1"/></svg>
<div class="b" style="left:383px;top:132px;width:1px;height:60px;background:#3e3e3a;"></div>
<div class="b" style="left:395px;top:147px;width:1px;height:15px;background:#3e3e3a;"></div>
<div class="b" style="left:1005px;top:59px;width:102px;height:2px;background:#6e6434;"></div>
<div class="b" style="left:1028px;top:59px;width:29px;height:2px;background:#c9a640;"></div>
<div class="b" style="left:1007px;top:65px;width:8px;height:1px;background:#44506a;"></div>
<div class="b" style="left:1010px;top:67px;width:10px;height:1px;background:#703a48;"></div>
<div class="b" style="left:1007px;top:69px;width:12px;height:1px;background:#44506a;"></div>
<div class="b" style="left:1007px;top:71px;width:8px;height:1px;background:#44506a;"></div>
<div class="b" style="left:1107px;top:57px;width:14px;height:525px;background:#363636;"></div>
<div class="b" style="left:1108px;top:62px;width:1px;height:0px;background:#000;"></div>
<div class="b" style="left:1117px;top:69px;width:4px;height:12px;background:#c9a227;"></div>
<div class="b" style="left:1107px;top:177px;width:14px;height:2px;background:#8a5a2a;"></div>
<div class="b" style="left:1107px;top:582px;width:1px;height:122px;background:#3a3a2a;"></div>
<div class="b" style="left:323px;top:704px;width:799px;height:1px;background:#3a3a2a;"></div>
<div class="b" style="left:1426px;top:0px;width:494px;height:35px;background:#202026;"></div>
<div class="b" style="left:1275px;top:0px;width:151px;height:35px;background:#383836;"></div>
<svg class="b" style="left:1138px;top:11px;" width="10" height="12" viewBox="0 0 10 12"><path d="M0 1.5 H9 M0 4.5 H6 M0 7.5 H9 M0 10.5 H6" stroke="#bdbdbd" stroke-width="1.3"/></svg>
<div class="t" style="left:1153px;top:8px;height:20px;line-height:20px;font-size:13.4px;color:#a0a0a0;font-weight:normal;font-style:normal;font-family:'Liberation Sans',sans-serif;">Simple Browser</div>
<svg class="b" style="left:1256px;top:12px;" width="10" height="10" viewBox="0 0 10 10"><path d="M1 1 L9 9 M9 1 L1 9" stroke="#6e6e72" stroke-width="1.1"/></svg>
<svg class="b" style="left:1291px;top:12px;" width="12" height="12" viewBox="0 0 12 12"><path d="M0 0.5 H12 L6 11 Z" fill="#9bd04f"/><path d="M2.3 0.5 L6 7.2 L9.7 0.5" fill="none" stroke="#2a3a20" stroke-width="0.9"/><path d="M4.2 0.5 H7.8 L6 3.8 Z" fill="#1e1e1e"/></svg>
<div class="t" style="left:1308px;top:8px;height:20px;line-height:20px;font-size:13.4px;color:#8a8a8e;font-weight:normal;font-style:italic;font-family:'Liberation Sans',sans-serif;">HelloWorld.vue</div>
<svg class="b" style="left:1889px;top:16px;" width="16" height="4" viewBox="0 0 16 4"><circle cx="2" cy="2" r="1.2" fill="#c5c5c5"/><circle cx="7" cy="2" r="1.2" fill="#c5c5c5"/><circle cx="12" cy="2" r="1.2" fill="#c5c5c5"/></svg>
<svg class="b" style="left:1137px;top:44px;" width="16" height="14" viewBox="0 0 16 14"><path d="M15 7 H1.5 M7 1.5 L1.5 7 L7 12.5" fill="none" stroke="#c5c5c5" stroke-width="1.2"/></svg>
<svg class="b" style="left:1163px;top:44px;" width="16" height="14" viewBox="0 0 16 14"><path d="M1 7 H14.5 M9 1.5 L14.5 7 L9 12.5" fill="none" stroke="#c5c5c5" stroke-width="1.2"/></svg>
<svg class="b" style="left:1189px;top:44px;" width="15" height="15" viewBox="0 0 15 15"><path d="M7.5 2 A5.7 5.7 0 1 1 2.6 4.8" fill="none" stroke="#c5c5c5" stroke-width="1.2"/><path d="M7.5 0 V4.5 L4.5 2.2 Z" fill="#c5c5c5"/></svg>
<div class="b" style="left:1211px;top:40px;width:665px;height:23px;background:#323236;"></div>
<div class="t" style="left:1216px;top:42px;height:20px;line-height:20px;font-size:14.4px;color:#cfcfcf;font-weight:normal;font-style:normal;font-family:'Liberation Sans',sans-serif;">http://localhost:3333</div>
<svg class="b" style="left:1884px;top:43px;" width="16" height="16" viewBox="0 0 16 16"><path d="M7 1 H1 V15 H15 V9" fill="none" stroke="#c5c5c5" stroke-width="1.2"/><path d="M9 1 H15 V7 M15 1 L7 9" fill="none" stroke="#c5c5c5" stroke-width="1.2"/></svg>
<div class="b" style="left:1122px;top:67px;width:798px;height:637px;background:#fdfdff;"></div>
<div class="b" style="left:1904px;top:67px;width:16px;height:637px;background:#f2f2f6;"></div>
<div class="b" style="left:1909px;top:70px;width:8px;height:614px;background:#bfbfc6;border-radius:4px"></div>
<div class="t" style="left:1289px;top:386px;height:24px;line-height:24px;font-size:19.2px;font-weight:bold;color:#000;font-family:'Liberation Serif',serif">You’ve successfully created a project with <span style="color:#0000ee;text-decoration:underline">Vite</span> + <span style="color:#0000ee;text-decoration:underline">Vue 3</span>.</div>
<svg class="b" style="left:1356px;top:419px;" width="12" height="18" viewBox="0 0 12 18"><path d="M1 1 V14 L4 11 L6.5 16.5 L8.5 15.5 L6 10 H10 Z" fill="#000" stroke="#fff" stroke-width="1"/></svg>
<div class="t" style="left:343px;top:713px;height:20px;line-height:20px;font-size:10.6px;color:#a8a8a8;font-weight:normal;font-style:normal;font-family:'Liberation Sans',sans-serif;">PROBLEMS</div>
<svg class="b" style="left:413px;top:714px;" width="17" height="17" viewBox="0 0 17 17"><circle cx="8.5" cy="8.5" r="8.5" fill="#46464a"/><text x="8.5" y="12.5" font-size="11" text-anchor="middle" fill="#e0e0e0" font-family="Liberation Sans">1</text></svg>
<div class="t" style="left:453px;top:713px;height:20px;line-height:20px;font-size:10.8px;color:#a8a8a8;font-weight:normal;font-style:normal;font-family:'Liberation Sans',sans-serif;">OUTPUT</div>
<div class="t" style="left:523px;top:713px;height:20px;line-height:20px;font-size:10.8px;color:#a8a8a8;font-weight:normal;font-style:normal;font-family:'Liberation Sans',sans-serif;">DEBUG CONSOLE</div>
<div class="t" style="left:642px;top:713px;height:20px;line-height:20px;font-size:10.8px;color:#e7e7e7;font-weight:normal;font-style:normal;font-family:'Liberation Sans',sans-serif;">TERMINAL</div>
<div class="b" style="left:641px;top:734px;width:58px;height:1px;background:#e7e7e7;"></div>
<div class="t" style="left:721px;top:713px;height:20px;line-height:20px;font-size:10.8px;color:#a8a8a8;font-weight:normal;font-style:normal;font-family:'Liberation Sans',sans-serif;">COMMENTS</div>
<svg class="b" style="left:1614px;top:715px;" width="15" height="15" viewBox="0 0 15 15"><rect x="0.6" y="0.6" width="13.8" height="13.8" rx="1" fill="none" stroke="#c5c5c5" stroke-width="1.1"/><path d="M5.5 4.5 L8.5 7.5 L5.5 10.5" fill="none" stroke="#c5c5c5" stroke-width="1.1"/></svg>
<div class="t" style="left:1634px;top:713px;height:20px;line-height:20px;font-size:12px;color:#cccccc;font-weight:normal;font-style:normal;font-family:'Liberation Sans',sans-serif;">volar-preview:3333</div>
<svg class="b" style="left:1746px;top:716px;" width="14" height="14" viewBox="0 0 14 14"><path d="M7 0.5 V13.5 M0.5 7 H13.5" stroke="#c5c5c5" stroke-width="1.2"/></svg>
<svg class="b" style="left:1765px;top:719px;" width="10" height="7" viewBox="0 0 10 7"><path d="M1 1 L5 5 L9 1" fill="none" stroke="#a0a0a0" stroke-width="1"/></svg>
<svg class="b" style="left:1787px;top:715px;" width="14" height="14" viewBox="0 0 14 14"><rect x="0.6" y="0.6" width="12.8" height="12.8" rx="1" fill="none" stroke="#c5c5c5" stroke-width="1.2"/><path d="M7 1 V13" stroke="#c5c5c5" stroke-width="1.2"/></svg>
<svg class="b" style="left:1812px;top:714px;" width="13" height="15" viewBox="0 0 13 15"><path d="M0.5 3 H12.5 M4 3 V1 H9 V3 M2 3 L2.7 14.3 H10.3 L11 3 M5 5.5 V12 M8 5.5 V12" fill="none" stroke="#c5c5c5" stroke-width="1.1"/></svg>
<svg class="b" style="left:1838px;top:720px;" width="16" height="4" viewBox="0 0 16 4"><circle cx="2" cy="2" r="1.2" fill="#c5c5c5"/><circle cx="7" cy="2" r="1.2" fill="#c5c5c5"/><circle cx="12" cy="2" r="1.2" fill="#c5c5c5"/></svg>
<svg class="b" style="left:1865px;top:718px;" width="12" height="7" viewBox="0 0 12 7"><path d="M1 6 L6 1 L11 6" fill="none" stroke="#c5c5c5" stroke-width="1.2"/></svg>
<svg class="b" style="left:1891px;top:716px;" width="12" height="12" viewBox="0 0 12 12"><path d="M1 1 L11 11 M11 1 L1 11" stroke="#c5c5c5" stroke-width="1.2"/></svg>
<div class="b" style="left:1909px;top:766px;width:3px;height:11px;background:#2d8fc0;"></div>
<div class="b" style="left:1909px;top:777px;width:3px;height:13px;background:#55555a;"></div>
<div class="t" style="left:357px;top:762px;height:14px;line-height:14px;font-family:'Liberation Mono',monospace;font-size:11.67px;white-space:pre"><b style="color:#8ed44a">VITE</b> <span style="color:#8ed44a">v4.1.1</span>  <span style="color:#8a8a8a">ready in</span> <b style="color:#e5e5e5">1597</b> <span style="color:#c8c8c8">ms</span></div>
<div class="t" style="left:357px;top:790px;height:14px;line-height:14px;font-family:'Liberation Mono',monospace;font-size:11.67px;white-space:pre"><span style="color:#72b83a">➜</span>  <b style="color:#e5e5e5">Local</b><span style="color:#e5e5e5">:</span>   <span style="color:#4fb4d0">http://127.0.0.1:<b>3333</b>/</span></div>
<div class="t" style="left:357px;top:804px;height:14px;line-height:14px;font-family:'Liberation Mono',monospace;font-size:11.67px;white-space:pre"><span style="color:#3f6327">➜</span>  <b style="color:#666666">Network</b><span style="color:#666666">: use </span><b style="color:#e5e5e5">--host</b><span style="color:#666666"> to expose</span></div>
<div class="t" style="left:357px;top:818px;height:14px;line-height:14px;font-family:'Liberation Mono',monospace;font-size:11.67px;white-space:pre"><span style="color:#3f6327">➜</span>  <span style="color:#666666">press </span><b style="color:#e5e5e5">h</b><span style="color:#666666"> to show help</span></div>
<div class="b" style="left:343px;top:832px;width:8px;height:15px;background:transparent;border:1px solid #d0d0d0"></div>
<div class="b" style="left:0px;top:1058px;width:34px;height:22px;background:#2456c8;"></div>
<svg class="b" style="left:0px;top:1058px;" width="34" height="22" viewBox="0 0 34 22"><path d="M13 8 L16.5 12.3 L13 16.5 M21 5 L17.2 8.7 L21 12.5" fill="none" stroke="#f0f0ff" stroke-width="1.2"/></svg>
<svg class="b" style="left:43px;top:1062px;" width="12" height="14" viewBox="0 0 12 14"><path d="M1 1 H8 V13 H1 Z M8 7 H12 M10 5 L12 7 L10 9" fill="none" stroke="#d0d0d0" stroke-width="1"/></svg>
<div class="t" style="left:59px;top:1059px;height:20px;line-height:20px;font-size:12.7px;color:#e2e2e2;font-weight:normal;font-style:normal;font-family:'Liberation Sans',sans-serif;">Sign in to Jira</div>
<svg class="b" style="left:157px;top:1064px;" width="7" height="10" viewBox="0 0 7 10"><path d="M1.5 1 L5.5 5 L1.5 9" fill="none" stroke="#d0d0d0" stroke-width="1"/></svg>
<div class="t" style="left:170px;top:1059px;height:20px;line-height:20px;font-size:12.7px;color:#e2e2e2;font-weight:normal;font-style:normal;font-family:'Liberation Sans',sans-serif;">No active issue</div>
<svg class="b" style="left:272px;top:1062px;" width="12" height="14" viewBox="0 0 12 14"><path d="M1 1 H8 V13 H1 Z M8 7 H12 M10 5 L12 7 L10 9" fill="none" stroke="#d0d0d0" stroke-width="1"/></svg>
<div class="t" style="left:289px;top:1059px;height:20px;line-height:20px;font-size:12.7px;color:#e2e2e2;font-weight:normal;font-style:normal;font-family:'Liberation Sans',sans-serif;">Sign in to Bitbucket</div>
<svg class="b" style="left:416px;top:1063px;" width="12" height="12" viewBox="0 0 12 12"><circle cx="6" cy="6" r="5.3" fill="none" stroke="#d0d0d0" stroke-width="1"/><path d="M3.8 3.8 L8.2 8.2 M8.2 3.8 L3.8 8.2" stroke="#d0d0d0" stroke-width="1"/></svg>
<div class="t" style="left:431px;top:1059px;height:20px;line-height:20px;font-size:12.7px;color:#e2e2e2;font-weight:normal;font-style:normal;font-family:'Liberation Sans',sans-serif;">0</div>
<svg class="b" style="left:443px;top:1062px;" width="14" height="13" viewBox="0 0 14 13"><path d="M7 1 L13 12 H1 Z" fill="none" stroke="#d0d0d0" stroke-width="1"/><path d="M7 5 V8.5 M7 9.8 V10.8" stroke="#d0d0d0" stroke-width="1"/></svg>
<div class="t" style="left:461px;top:1059px;height:20px;line-height:20px;font-size:12.7px;color:#e2e2e2;font-weight:normal;font-style:normal;font-family:'Liberation Sans',sans-serif;">1</div>
<svg class="b" style="left:485px;top:1063px;" width="12" height="12" viewBox="0 0 12 12"><path d="M10.5 4 A5 5 0 1 0 11 7" fill="none" stroke="#d0d0d0" stroke-width="1.1"/><path d="M8 1 L11 4 L7.5 5" fill="none" stroke="#d0d0d0" stroke-width="1.1"/></svg>
<div class="t" style="left:501px;top:1059px;height:20px;line-height:20px;font-size:12.7px;color:#e2e2e2;font-weight:normal;font-style:normal;font-family:'Liberation Sans',sans-serif;">Initializing JS/TS language features</div>
<svg class="b" style="left:892px;top:1063px;" width="14" height="12" viewBox="0 0 14 12"><path d="M1 6 Q7 -1 13 6 Q7 13 1 6 Z M1 1 L13 11" fill="none" stroke="#d0d0d0" stroke-width="1"/></svg>
<div class="t" style="left:909px;top:1059px;height:20px;line-height:20px;font-size:12.7px;color:#e2e2e2;font-weight:normal;font-style:normal;font-family:'Liberation Sans',sans-serif;">Auto Format Vue: Off</div>
<div class="t" style="left:1045px;top:1059px;height:20px;line-height:20px;font-size:12.7px;color:#e2e2e2;font-weight:normal;font-style:normal;font-family:'Liberation Sans',sans-serif;">Ln 11, Col 1</div>
<div class="t" style="left:1130px;top:1059px;height:20px;line-height:20px;font-size:12.7px;color:#e2e2e2;font-weight:normal;font-style:normal;font-family:'Liberation Sans',sans-serif;">Spaces: 2</div>
<div class="t" style="left:1201px;top:1059px;height:20px;line-height:20px;font-size:12.7px;color:#e2e2e2;font-weight:normal;font-style:normal;font-family:'Liberation Sans',sans-serif;">UTF-8</div>
<div class="t" style="left:1255px;top:1059px;height:20px;line-height:20px;font-size:12.7px;color:#e2e2e2;font-weight:normal;font-style:normal;font-family:'Liberation Sans',sans-serif;">LF</div>
<div class="t" style="left:1283px;top:1059px;height:20px;line-height:20px;font-size:11px;color:#e2e2e2;font-weight:normal;font-style:normal;font-family:'Liberation Sans',sans-serif;">{ }</div>
<div class="t" style="left:1302px;top:1059px;height:20px;line-height:20px;font-size:12.7px;color:#e2e2e2;font-weight:normal;font-style:normal;font-family:'Liberation Sans',sans-serif;">Vue</div>
<svg class="b" style="left:1340px;top:1062px;" width="12" height="14" viewBox="0 0 12 14"><circle cx="6" cy="6" r="1.5" fill="#d0d0d0"/><path d="M3 9 A4 4 0 1 1 9 9 M1.5 10.5 A6 6 0 1 1 10.5 10.5 M6 7.5 V13" fill="none" stroke="#d0d0d0" stroke-width="1"/></svg>
<div class="t" style="left:1357px;top:1059px;height:20px;line-height:20px;font-size:12.7px;color:#e2e2e2;font-weight:normal;font-style:normal;font-family:'Liberation Sans',sans-serif;">Go Live</div>
<div class="t" style="left:1415px;top:1059px;height:20px;line-height:20px;font-size:12.7px;color:#e2e2e2;font-weight:normal;font-style:normal;font-family:'Liberation Sans',sans-serif;">No tsconfig</div>
<div class="t" style="left:1496px;top:1059px;height:20px;line-height:20px;font-size:12.7px;color:#e2e2e2;font-weight:normal;font-style:normal;font-family:'Liberation Sans',sans-serif;">&lt;TagName prop-name /&gt;</div>
<div class="t" style="left:1654px;top:1059px;height:20px;line-height:20px;font-size:12.7px;color:#e2e2e2;font-weight:normal;font-style:normal;font-family:'Liberation Sans',sans-serif;">4.9.5 (vue)</div>
<div class="b" style="left:1724px;top:1058px;width:129px;height:22px;background:#6c5a06;"></div>
<div class="t" style="left:1734px;top:1059px;height:20px;line-height:20px;font-size:12.7px;color:#e2e2e2;font-weight:normal;font-style:normal;font-family:'Liberation Sans',sans-serif;">Preview Port: 3333</div>
<svg class="b" style="left:1862px;top:1062px;" width="15" height="14" viewBox="0 0 15 14"><path d="M1 1 H14 V9 H7 L4 12 V9 H1 Z" fill="none" stroke="#d0d0d0" stroke-width="1"/></svg>
<svg class="b" style="left:1892px;top:1062px;" width="14" height="14" viewBox="0 0 14 14"><path d="M3 10 V6 A4 4 0 0 1 11 6 V10 L12 11 H2 Z M5.5 12.5 H8.5" fill="none" stroke="#d0d0d0" stroke-width="1"/><circle cx="11" cy="3" r="2.2" fill="#d0d0d0"/></svg>
</body></html>
